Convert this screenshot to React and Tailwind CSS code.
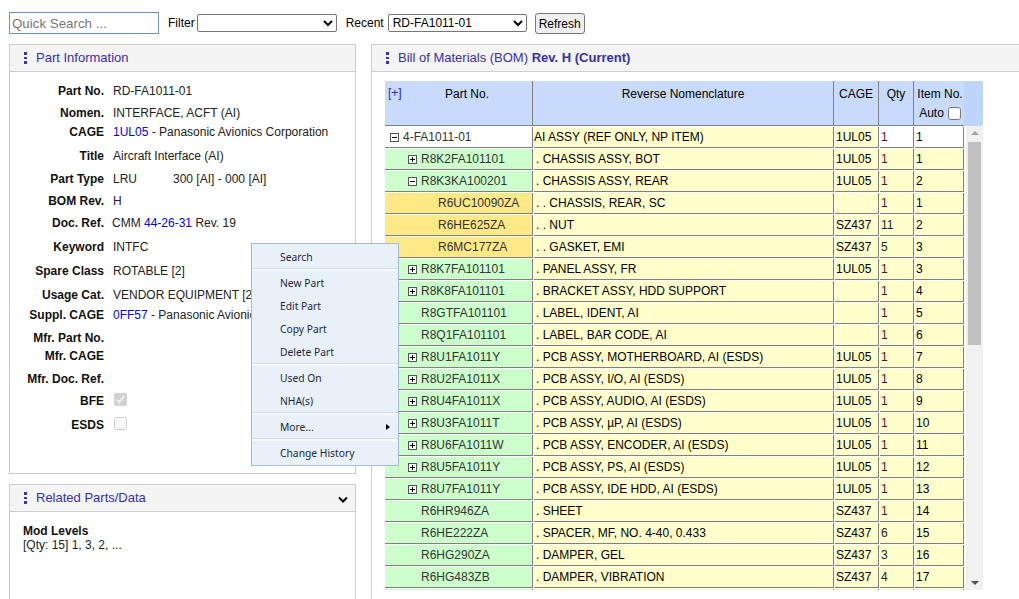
import React from "react";

const info = [
  ["Part No.", <span>RD-FA1011-01</span>, "h-[22px]"],
  ["Nomen.", <span>INTERFACE, ACFT (AI)</span>, "h-[19px]"],
  ["CAGE", <span><a className="text-[#0000ee]">1UL05</a> - Panasonic Avionics Corporation</span>, "h-[24px]"],
  ["Title", <span>Aircraft Interface (AI)</span>, "h-[23px]"],
  ["Part Type", <span className="flex"><span className="w-[60px]">LRU</span><span>300 [AI] - 000 [AI]</span></span>, "h-[22px]"],
  ["BOM Rev.", <span>H</span>, "h-[22px]"],
  ["Doc. Ref.", <span className="-ml-px">CMM <a className="text-[#0000ee]">44-26-31</a> Rev. 19</span>, "h-[24px]"],
  ["Keyword", <span>INTFC</span>, "h-[24px]"],
  ["Spare Class", <span>ROTABLE [2]</span>, "h-[24px]"],
  ["Usage Cat.", <span>VENDOR EQUIPMENT [2]</span>, "h-[20px]"],
  ["Suppl. CAGE", <span><a className="text-[#0000ee]">0FF57</a> - Panasonic Avionics</span>, "h-[23px]"],
  ["Mfr. Part No.", null, "h-[18px]"],
  ["Mfr. CAGE", null, "h-[23px]"],
  ["Mfr. Doc. Ref.", null, "h-[22px]"],
  ["BFE", <input type="checkbox" checked disabled readOnly className="block m-0 ml-px -mt-px w-[13px] h-[13px]" />, "h-[24px]"],
  ["ESDS", <input type="checkbox" disabled className="block m-0 ml-px -mt-px w-[13px] h-[13px]" />, "h-[24px]"],
];

const rows = [
  ["4-FA1011-01", "AI ASSY (REF ONLY, NP ITEM)", "1UL05", "1", "1", 0, "-", "w"],
  ["R8K2FA101101", ". CHASSIS ASSY, BOT", "1UL05", "1", "1", 1, "+", "g"],
  ["R8K3KA100201", ". CHASSIS ASSY, REAR", "1UL05", "1", "2", 1, "-", "g"],
  ["R6UC10090ZA", ". . CHASSIS, REAR, SC", "", "1", "1", 2, "", "o"],
  ["R6HE625ZA", ". . NUT", "SZ437", "11", "2", 2, "", "o"],
  ["R6MC177ZA", ". . GASKET, EMI", "SZ437", "5", "3", 2, "", "o"],
  ["R8K7FA101101", ". PANEL ASSY, FR", "1UL05", "1", "3", 1, "+", "g"],
  ["R8K8FA101101", ". BRACKET ASSY, HDD SUPPORT", "", "1", "4", 1, "+", "g"],
  ["R8GTFA101101", ". LABEL, IDENT, AI", "", "1", "5", 1, "", "g"],
  ["R8Q1FA101101", ". LABEL, BAR CODE, AI", "", "1", "6", 1, "", "g"],
  ["R8U1FA1011Y", ". PCB ASSY, MOTHERBOARD, AI (ESDS)", "1UL05", "1", "7", 1, "+", "g"],
  ["R8U2FA1011X", ". PCB ASSY, I/O, AI (ESDS)", "1UL05", "1", "8", 1, "+", "g"],
  ["R8U4FA1011X", ". PCB ASSY, AUDIO, AI (ESDS)", "1UL05", "1", "9", 1, "+", "g"],
  ["R8U3FA1011T", ". PCB ASSY, µP, AI (ESDS)", "1UL05", "1", "10", 1, "+", "g"],
  ["R8U6FA1011W", ". PCB ASSY, ENCODER, AI (ESDS)", "1UL05", "1", "11", 1, "+", "g"],
  ["R8U5FA1011Y", ". PCB ASSY, PS, AI (ESDS)", "1UL05", "1", "12", 1, "+", "g"],
  ["R8U7FA1011Y", ". PCB ASSY, IDE HDD, AI (ESDS)", "1UL05", "1", "13", 1, "+", "g"],
  ["R6HR946ZA", ". SHEET", "SZ437", "1", "14", 1, "", "g"],
  ["R6HE222ZA", ". SPACER, MF, NO. 4-40, 0.433", "SZ437", "6", "15", 1, "", "g"],
  ["R6HG290ZA", ". DAMPER, GEL", "SZ437", "3", "16", 1, "", "g"],
  ["R6HG483ZB", ". DAMPER, VIBRATION", "SZ437", "4", "17", 1, "", "g"],
  ["", "", "", "", "", 1, "", "g"],
];

const partBg = { w: "bg-white", g: "bg-[#ccffcc]", o: "bg-[#ffe987]" };
const cols = "grid grid-cols-[148px_301px_45px_35px_50px] w-[579px]";

function Dots() {
  return (
    <span className="flex flex-col gap-[2px] w-[3px] mr-[9px]">
      <i className="block w-[3px] h-[2.5px] bg-[#3a2fb8]" />
      <i className="block w-[3px] h-[2.5px] bg-[#3a2fb8]" />
      <i className="block w-[3px] h-[2.5px] bg-[#3a2fb8]" />
    </span>
  );
}

function Box({ t }) {
  return (
    <span className="relative inline-block w-[9px] h-[9px] border border-[#555] bg-white shrink-0">
      <i className="absolute left-[1px] top-[3px] w-[5px] h-px bg-black" />
      {t === "+" && <i className="absolute left-[3px] top-[1px] w-px h-[5px] bg-black" />}
    </span>
  );
}

function Cell({ className, children }) {
  return (
    <div className="h-[22px] pt-px pl-px first:pl-0 bg-white">
      <div className={`h-full border-r border-b border-[#808080] flex items-center overflow-hidden whitespace-nowrap ${className}`}>
        {children}
      </div>
    </div>
  );
}

function Row({ r }) {
  const [pn, name, cage, qty, item, lvl, box, c] = r;
  const cellBg = c === "w" ? "bg-white" : "bg-[#ffffcc]";
  const pad = lvl === 0 ? "pl-[5px]" : lvl === 1 && box ? "pl-[23px]" : lvl === 1 ? "pl-[36px]" : "pl-[53px]";
  return (
    <div className={cols}>
      <Cell className={`${partBg[c]} ${pad} gap-[4px] text-[#333]`}>
        {box && <Box t={box} />}
        <span>{pn}</span>
      </Cell>
      <Cell className="bg-[#ffffcc]">{lvl === 0 ? name : <span className="pl-[2px] whitespace-pre">{name}</span>}</Cell>
      <Cell className="bg-[#ffffcc] pl-[1px]">{cage}</Cell>
      <Cell className={`${cellBg} pl-[1px] ${qty === "1" ? "text-[#551133]" : "text-[#222]"}`}>{qty}</Cell>
      <Cell className={`${cellBg} pl-[1px]`}>{item}</Cell>
    </div>
  );
}

function Panel({ title, className, right, children }) {
  return (
    <section className={`border border-[#cccccc] bg-white ${className}`}>
      <header className="h-[27px] bg-[#f4f4f4] border-b border-[#cccccc] flex items-center pl-[14px] text-[#3730b0] text-[13px]">
        <Dots />
        {title}
        {right}
      </header>
      {children}
    </section>
  );
}

function MenuItem({ children, arrow }) {
  return (
    <div className="h-[23px] pl-[28px] flex items-center justify-between pr-[8px]">
      <span>{children}</span>
      {arrow && <i className="w-0 h-0 border-y-[3px] border-y-transparent border-l-[4px] border-l-black" />}
    </div>
  );
}

function Sep() {
  return <div className="h-[3px] bg-[#f7fafd] border-t border-[#d4dce6]" />;
}

const hdr = "h-[45px] bg-[#c8dbfc] border-r border-b border-[#808080]";

export default function App() {
  return (
    <div className="relative w-[1019px] h-[599px] overflow-hidden bg-white text-[12px] leading-[14px] text-black font-['Liberation_Sans',Arial,sans-serif]">
      <div className="h-[44px] flex items-start pl-[9px] pt-[12px] text-[12px]">
        <input placeholder="Quick Search ..." className="w-[150px] h-[22px] border border-[#6d94b8] px-[2px] text-[13.33px] placeholder:text-[#777] outline-none" />
        <span className="ml-[9px] mt-[4px]">Filter</span>
        <select className="ml-[2px] mt-[2px] w-[140px] h-[18px] border border-[#767676] rounded-[2px] bg-white text-[12px]"><option></option></select>
        <span className="ml-[9px] mt-[4px]">Recent</span>
        <select defaultValue="RD-FA1011-01" className="ml-[4px] mt-[2px] w-[139px] h-[18px] border border-[#767676] rounded-[2px] bg-white text-[12px]"><option>RD-FA1011-01</option></select>
        <button className="ml-[8px] mt-[1px] w-[50px] h-[21px] border border-[#767676] rounded-[3px] bg-[#efefef] text-[12px]">Refresh</button>
      </div>

      <div className="flex items-start pl-[9px] gap-[15px]">
        <div className="w-[347px] flex flex-col gap-[10px] shrink-0">
          <Panel title="Part Information" className="h-[430px]">
            <div className="pt-[12px]">
              {info.map(([label, val, h]) => (
                <div key={label} className={`flex items-start ${h}`}>
                  <b className="w-[94px] text-right whitespace-nowrap text-[#111]">{label}</b>
                  <div className="ml-[9px] whitespace-nowrap text-[#222]">{val}</div>
                </div>
              ))}
            </div>
          </Panel>
          <Panel
            title="Related Parts/Data"
            className="h-[200px]"
            right={
              <svg viewBox="0 0 10 7" className="w-[10px] h-[7px] ml-auto mr-[7px] mt-[3px]">
                <path d="M1 1.5 L5 5.5 L9 1.5" fill="none" stroke="#000" strokeWidth="2" />
              </svg>
            }
          >
            <div className="pl-[13px] pt-[12px]">
              <b className="block text-[#111]">Mod Levels</b>
              <div className="text-[#222]">[Qty: 15] 1, 3, 2, ...</div>
            </div>
          </Panel>
        </div>

        <Panel
          title={<span>Bill of Materials (BOM) <b>Rev. H (Current)</b></span>}
          className="w-[660px] h-[600px] shrink-0"
        >
          <div className="pl-[13px] pt-[9px]">
            <div className="flex">
              <div className={cols}>
                <div className={`${hdr} relative pt-[6px] text-center pl-[17px]`}>
                  <a className="absolute left-[3px] top-[5px] text-[#2a2ad0]">[+]</a>
                  Part No.
                </div>
                <div className={`${hdr} pt-[6px] text-center`}>Reverse Nomenclature</div>
                <div className={`${hdr} pt-[6px] text-center`}>CAGE</div>
                <div className={`${hdr} pt-[6px] text-center`}>Qty</div>
                <div className={`${hdr} border-r-0 pt-[6px] pl-[2px] text-center`}>
                  Item No.
                  <div className="flex items-center justify-center gap-[4px] mt-[5px]">
                    Auto
                    <input type="checkbox" className="block m-0 w-[13px] h-[13px]" />
                  </div>
                </div>
              </div>
              <div className="w-[19px] h-[45px] bg-[#bfd4fb]" />
            </div>
            <div className="flex h-[464px] overflow-hidden">
              <div className="w-[579px]">
                {rows.map((r, i) => (
                  <Row key={i} r={r} />
                ))}
              </div>
              <div className="w-[17px] ml-[2px] h-[464px] bg-[#f1f1f1] flex flex-col items-center">
                <i className="mt-[5px] w-0 h-0 border-x-[4px] border-x-transparent border-b-[4px] border-b-[#a3a3a3]" />
                <div className="mt-[7px] w-[13px] h-[203px] bg-[#c1c1c1]" />
                <i className="mt-auto mb-[5px] w-0 h-0 border-x-[4px] border-x-transparent border-t-[4px] border-t-[#505050]" />
              </div>
            </div>
          </div>
        </Panel>
      </div>

      <div className="absolute left-[251px] top-[243px] w-[148px] h-[223px] pt-px bg-[#e8f0fa] border border-[#a3bbd3] text-[10.3px] text-[#1e2a36] font-['Noto_Sans',sans-serif]">
        <MenuItem>Search</MenuItem>
        <Sep />
        <MenuItem>New Part</MenuItem>
        <MenuItem>Edit Part</MenuItem>
        <MenuItem>Copy Part</MenuItem>
        <MenuItem>Delete Part</MenuItem>
        <Sep />
        <MenuItem>Used On</MenuItem>
        <MenuItem>NHA(s)</MenuItem>
        <Sep />
        <MenuItem arrow>More...</MenuItem>
        <Sep />
        <MenuItem>Change History</MenuItem>
      </div>
    </div>
  );
}
